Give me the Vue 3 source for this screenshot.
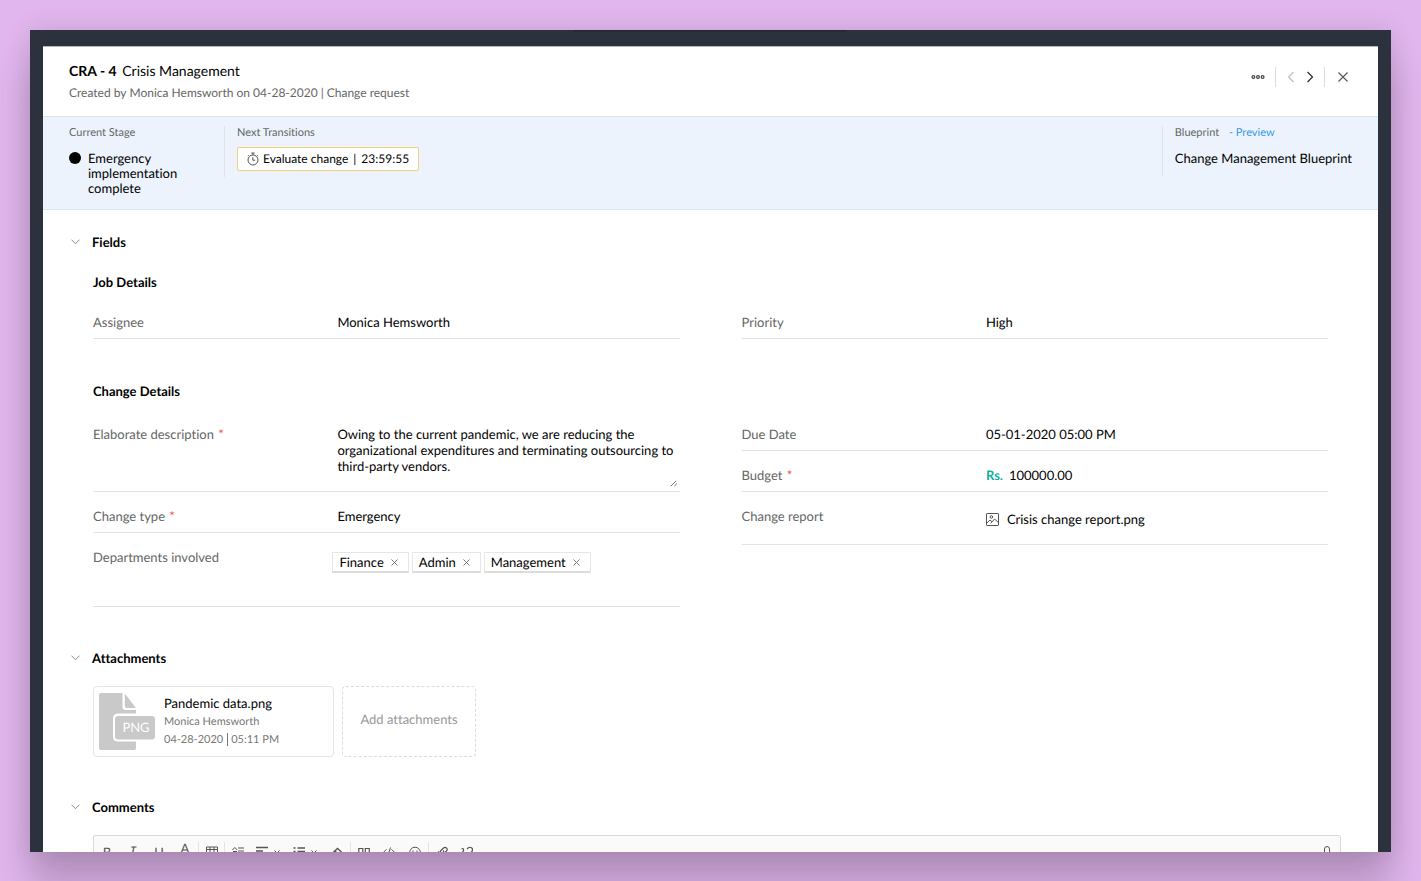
<script setup>
import { ref } from 'vue'

const description = ref(
  'Owing to the current pandemic, we are reducing the organizational expenditures and terminating outsourcing to third-party vendors.'
)
const assignee = ref('Monica Hemsworth')
const priority = ref('High')
const dueDate = ref('05-01-2020 05:00 PM')
const budget = ref('100000.00')
const changeType = ref('Emergency')
const departments = ref(['Finance', 'Admin', 'Management'])

const removeDepartment = (name) => {
  departments.value = departments.value.filter((d) => d !== name)
}
</script>

<template>
  <div class="stage">
    <div class="frame">
      <main class="panel">
        <header class="head">
          <div>
            <h1 class="title"><b>CRA - 4</b> Crisis Management</h1>
            <p class="byline">
              <span>Created by</span><span>Monica Hemsworth</span><span>on 04-28-2020</span><span>| Change request</span>
            </p>
          </div>
          <nav class="actions" aria-label="Record actions">
            <button class="icon-btn more" aria-label="More">
              <svg width="14" height="6" viewBox="0 0 14 6" fill="none" stroke="#444" stroke-width="1.2">
                <circle cx="2.4" cy="3" r="1.4" /><circle cx="7" cy="3" r="1.4" /><circle cx="11.6" cy="3" r="1.4" />
              </svg>
            </button>
            <i class="bar"></i>
            <button class="icon-btn" aria-label="Previous">
              <svg width="8" height="12" viewBox="0 0 8 12" fill="none" stroke="#bbb" stroke-width="1.1"><path d="M6.5 1L1.5 6l5 5" /></svg>
            </button>
            <button class="icon-btn" aria-label="Next">
              <svg width="8" height="12" viewBox="0 0 8 12" fill="none" stroke="#333" stroke-width="1.3"><path d="M1.5 1l5 5-5 5" /></svg>
            </button>
            <i class="bar"></i>
            <button class="icon-btn close" aria-label="Close">
              <svg width="10" height="10" viewBox="0 0 10 10" fill="none" stroke="#555" stroke-width="1.1"><path d="M.5.5l9 9M9.5.5l-9 9" /></svg>
            </button>
          </nav>
        </header>

        <section class="strip">
          <div class="strip-col current">
            <span class="small">Current Stage</span>
            <div class="state"><i class="dot"></i><span>Emergency implementation complete</span></div>
          </div>
          <div class="strip-col next">
            <span class="small">Next Transitions</span>
            <button class="transition">
              <svg width="12" height="14" viewBox="0 0 12 14" fill="none" stroke="#555" stroke-width="1">
                <circle cx="6" cy="8" r="5" /><path d="M4.3 1h3.4M6 1v2M10 3.2l1 1M2 3.2l-1 1M5.8 5.2v3h2.4" />
              </svg>
              <span>Evaluate change</span><span>|</span><span>23:59:55</span>
            </button>
          </div>
          <div class="strip-col blueprint">
            <span class="small">Blueprint <a href="#preview">- Preview</a></span>
            <span class="bp-name">Change Management Blueprint</span>
          </div>
        </section>

        <section class="section">
          <h2 class="section-title">
            <button class="toggle" aria-label="Collapse fields"><svg width="9" height="6" viewBox="0 0 9 6" fill="none" stroke="#888"><path d="M.5.7l4 4 4-4" /></svg></button>
            Fields
          </h2>

          <h3 class="group-title job">Job Details</h3>
          <div class="columns">
            <div class="row">
              <label for="assignee">Assignee</label>
              <input id="assignee" v-model="assignee" type="text" />
            </div>
            <div class="row">
              <label for="priority">Priority</label>
              <select id="priority" v-model="priority"><option>High</option><option>Medium</option><option>Low</option></select>
            </div>
          </div>

          <h3 class="group-title change">Change Details</h3>
          <div class="columns">
            <div>
              <div class="row">
                <label for="description">Elaborate description <em>*</em></label>
                <div class="area">
                  <textarea id="description" v-model="description"></textarea>
                  <svg class="grip" width="8" height="8" viewBox="0 0 8 8" stroke="#666" stroke-width=".9"><path d="M.8 7.2l5.4-5.4M4.3 7.2L7 4.5" /></svg>
                </div>
              </div>
              <div class="row">
                <label for="type">Change type <em>*</em></label>
                <select id="type" v-model="changeType"><option>Emergency</option><option>Standard</option></select>
              </div>
              <div class="row departments">
                <span>Departments involved</span>
                <ul class="chips">
                  <li v-for="name in departments" :key="name" class="chip">
                    {{ name }}
                    <button :aria-label="'Remove ' + name" @click="removeDepartment(name)">
                      <svg width="7" height="7" viewBox="0 0 7 7" stroke="#777"><path d="M.5.5l6 6M6.5.5l-6 6" /></svg>
                    </button>
                  </li>
                </ul>
              </div>
            </div>
            <div>
              <div class="row">
                <label for="due">Due Date</label>
                <input id="due" v-model="dueDate" type="text" />
              </div>
              <div class="row">
                <label for="budget">Budget <em>*</em></label>
                <div class="money"><b>Rs.</b><input id="budget" v-model="budget" type="text" /></div>
              </div>
              <div class="row report">
                <span>Change report</span>
                <div class="file">
                  <svg width="13" height="13" viewBox="0 0 13 13" fill="none" stroke="#555"><rect x=".5" y=".5" width="12" height="12" rx=".6" /><circle cx="5.4" cy="4" r="1.3" /><path d="M.8 10.2L4 7l2 1.8M4.6 10.4L8.6 6l3.8 3.6" /></svg>
                  Crisis change report.png
                </div>
              </div>
            </div>
          </div>
        </section>

        <section class="section attachments">
          <h2 class="section-title">
            <button class="toggle" aria-label="Collapse attachments"><svg width="9" height="6" viewBox="0 0 9 6" fill="none" stroke="#888"><path d="M.5.7l4 4 4-4" /></svg></button>
            Attachments
          </h2>
          <div class="cards">
            <article class="card">
              <svg width="57" height="58" viewBox="0 0 57 58">
                <path d="M2 0H23.500V14Q23.500 17 26.500 17H37V20.500H19Q14 20.500 14 25.500V43.500Q14 48.500 19 48.500H37V55Q37 57 35 57H2Q0 57 0 55V2Q0 0 2 0Z" fill="#c9c9c9" />
                <path d="M25.800 .500L37 15H27.500Q25.800 15 25.800 13Z" fill="#c9c9c9" />
                <rect x="16" y="23" width="40" height="23.500" rx="3" fill="#c9c9c9" />
                <text x="37" y="39" text-anchor="middle" font-size="13" fill="#fff">PNG</text>
              </svg>
              <div class="meta">
                <span class="name">Pandemic data.png</span>
                <span class="sub">Monica Hemsworth</span>
                <span class="sub stamp"><span>04-28-2020</span><span>05:11 PM</span></span>
              </div>
            </article>
            <button class="add">Add attachments</button>
          </div>
        </section>

        <section class="section comments">
          <h2 class="section-title">
            <button class="toggle" aria-label="Collapse comments"><svg width="9" height="6" viewBox="0 0 9 6" fill="none" stroke="#888"><path d="M.5.7l4 4 4-4" /></svg></button>
            Comments
          </h2>
          <div class="editor" role="toolbar" aria-label="Formatting">
            <button aria-label="Bold">B</button>
            <button class="italic" aria-label="Italic">I</button>
            <button aria-label="Underline">U</button>
            <button class="colour" aria-label="Text colour">A</button>
            <button class="sep" aria-label="Table"><svg viewBox="0 0 12 12"><path d="M.5 1h11v10.500H.5zM.5 3.500h11M.5 6.500h11M4 1v10.500M8 1v10.500" /></svg></button>
            <button class="sep" aria-label="Line height"><svg viewBox="0 0 12 12"><path d="M.3 4l2.500-2.500L5.300 4M1 5.500h4M6 2h6M6 5h6M6 8.500h6M.8 8.500l2 2 2-2" /></svg></button>
            <button class="menu" aria-label="Align"><svg viewBox="0 0 12 12"><path d="M0 1.500h12M0 5h7M0 8.500h12" stroke-width="1.300" /></svg><svg class="caret" viewBox="0 0 6 12"><path d="M.5 4.500l2.500 2.500L5.500 4.500" /></svg></button>
            <button class="menu" aria-label="List"><svg viewBox="0 0 12 12"><path d="M4.500 2h7.500M4.500 5.500h7.500M4.500 9h7.500M.5 2h2M.5 5.500h2M.5 9h2" stroke-width="1.300" /></svg><svg class="caret" viewBox="0 0 6 12"><path d="M.5 4.500l2.500 2.500L5.500 4.500" /></svg></button>
            <button aria-label="Clear formatting"><svg viewBox="0 0 12 12"><path d="M1 7.500l5.500-5 5 4.500L6.500 11.500H4.500zM4 5L8.500 9.500" stroke-width="1.300" /></svg></button>
            <button class="sep" aria-label="Quote"><svg viewBox="0 0 12 12"><path d="M.8 2.500h4v4.500h-4zM7.300 2.500h4v4.500h-4zM4.800 7q0 3-3 4M11.300 7q0 3-3 4" stroke-width="1.200" /></svg></button>
            <button aria-label="Code"><svg viewBox="0 0 12 12"><path d="M3.500 3.300L.5 6.300l3 3.200M8.500 3.300l3 3-3 3.200M7.500 1.500l-3 9" /></svg></button>
            <button aria-label="Emoji"><svg viewBox="0 0 12 12"><circle cx="6" cy="6.500" r="5.300" /><path d="M4 4.500v1.500M8 4.500v1.500M3.300 8q2.700 2.500 5.400 0" /></svg></button>
            <button class="sep" aria-label="Link"><svg viewBox="0 0 12 12"><path d="M5 7.500q-1.500-1.500 0-3l2.500-2.500q1.500-1.300 3 0t0 3L9 6.500M7 4.500q1.500 1.500 0 3L4.500 10q-1.500 1.300-3 0t0-3L3 5.500" stroke-width="1.200" /></svg></button>
            <button aria-label="Unlink"><svg viewBox="0 0 12 12"><path d="M6 3l1-1q2-1.500 3.700 0t0 3.700L9.500 7M6 9l-1 1q-2 1.500-3.700 0t0-3.700L2.500 5M.5 2.500l2 .5V5M11 10.500l-2-.5" stroke-width="1.200" /></svg></button>
            <button class="mic" aria-label="Dictate"><svg viewBox="0 0 12 12"><path d="M3.500 6V3q0-2.500 2.500-2.500T8.500 3v3q0 2.500-2.500 2.500T3.500 6zM6 8.500v3" /></svg></button>
          </div>
        </section>
      </main>
    </div>
  </div>
</template>

<style>
body {
  background: #e1b6ee;
  overflow: hidden;
}
</style>

<style scoped>
* {
  box-sizing: border-box;
}
.stage {
  height: 100vh;
  padding: 30px 30px 29px;
  font-family: Lato, "Open Sans", sans-serif;
  font-size: 13px;
  line-height: 16px;
  font-variant-ligatures: none;
  text-rendering: geometricPrecision;
  color: #000;
}
.frame {
  position: relative;
  height: 100%;
  padding: 16px 13px 0;
  background: #2b323e;
  box-shadow: 0 0 24px rgba(0, 0, 0, 0.12), 0 36px 36px rgba(0, 0, 0, 0.19);
}
.frame::before {
  content: "";
  position: absolute;
  top: 0;
  left: 40%;
  right: 40%;
  height: 3px;
  background: linear-gradient(#222630, #2b323e);
}
.panel {
  height: 100%;
  overflow: hidden;
  background: #fff;
  border-top: 1px solid #b4b8bc;
}
h1,
h2,
h3,
p,
ul {
  margin: 0;
  padding: 0;
}
button,
input,
select,
textarea {
  font: inherit;
  color: inherit;
  text-rendering: inherit;
  font-variant-ligatures: none;
  margin: 0;
  padding: 0;
  border: 0;
  background: none;
  outline: 0;
  appearance: none;
}
svg {
  flex: none;
}
.head {
  display: flex;
  justify-content: space-between;
  align-items: flex-start;
  height: 69px;
  padding: 14px 26px 0;
}
.title {
  font-size: 14px;
  font-weight: 400;
  line-height: 20px;
}
.title b {
  margin-right: 2px;
}
.byline {
  display: flex;
  gap: 3px;
  margin-top: 4px;
  font-size: 12px;
  color: #666;
}
.actions {
  display: flex;
  align-items: center;
  height: 20px;
  margin-top: 6px;
}
.icon-btn {
  display: flex;
  align-items: center;
  justify-content: center;
  width: 19px;
  height: 20px;
}
.bar {
  width: 1px;
  height: 20px;
  margin: 0 5px;
  background: #ddd;
}
.more {
  width: 24px;
}
.close {
  width: 22px;
  justify-content: flex-end;
  padding-right: 4px;
}
.strip {
  display: flex;
  padding: 8px 26px 13px;
  background: #ecf3fc;
  border: 1px solid #d6e8f5;
  border-width: 1px 0;
}
.strip-col {
  display: flex;
  flex-direction: column;
  align-items: flex-start;
}
.current {
  width: 155px;
}
.next,
.blueprint {
  position: relative;
  padding-left: 13px;
}
.next::before,
.blueprint::before {
  content: "";
  position: absolute;
  left: 0;
  top: 1px;
  width: 1px;
  height: 51px;
  background: #dde3ea;
}
.blueprint {
  margin-left: auto;
}
.small {
  font-size: 11px;
  color: #666;
}
.small a {
  margin-left: 7px;
  color: #3598e8;
  text-decoration: none;
}
.state {
  display: flex;
  gap: 7px;
  width: 130px;
  margin-top: 10px;
  line-height: 15px;
}
.dot {
  flex: none;
  width: 12px;
  height: 12px;
  margin-top: 1px;
  border-radius: 50%;
  background: #000;
}
.transition {
  display: flex;
  align-items: center;
  gap: 5px;
  height: 24px;
  margin-top: 6px;
  padding: 0 9px;
  border: 1px solid #f3cf7e;
  border-radius: 2px;
  background: #fff;
  font-size: 12px;
}
.transition svg {
  margin-right: -1px;
}
.bp-name {
  margin-top: 9px;
}
.section {
  padding: 24px 50px 0;
}
.section-title {
  display: flex;
  align-items: center;
  gap: 12px;
  margin-left: -22px;
  font-size: 13px;
  font-weight: 700;
}
.toggle {
  display: flex;
  width: 9px;
}
.group-title {
  font-size: 13px;
  font-weight: 700;
}
.job {
  margin: 24px 0 8px;
}
.change {
  margin: 44px 0 11px;
}
.columns {
  display: grid;
  grid-template-columns: 1fr 1fr;
  gap: 62px;
  align-items: start;
}
.row {
  display: grid;
  grid-template-columns: 5fr 7fr;
  align-items: start;
  padding: 16px 0 8px;
  border-bottom: 1px solid #e3e3e3;
}
.row > label,
.row > span {
  color: #666;
}
.row em {
  margin-left: 1px;
  color: #f04848;
  font-style: normal;
}
.row input,
.row select {
  display: block;
  width: 100%;
  height: 16px;
}
.area {
  position: relative;
}
.area textarea {
  display: block;
  width: 100%;
  height: 57px;
  resize: none;
  overflow: hidden;
}
.grip {
  position: absolute;
  right: 2px;
  bottom: -4px;
}
.departments {
  padding-bottom: 33px;
}
.chips {
  display: flex;
  gap: 3px;
  margin: 3px 0 0 -5px;
  list-style: none;
}
.chip {
  display: flex;
  align-items: center;
  gap: 7px;
  height: 21px;
  padding: 0 10px 0 6px;
  border: 1px solid #e6e6e6;
  border-bottom: 2px solid #dcdcdc;
}
.chip button {
  display: flex;
}
.money {
  display: flex;
  gap: 6px;
}
.money b {
  color: #12b0a0;
}
.file {
  display: flex;
  align-items: center;
  gap: 8px;
  margin: 3px 0 9px;
}
.attachments {
  padding-top: 43px;
}
.cards {
  display: flex;
  gap: 8px;
  margin-top: 20px;
}
.card {
  display: flex;
  gap: 8px;
  width: 241px;
  height: 71px;
  padding: 6px 5px;
  border: 1px solid #e4e4e4;
  border-radius: 4px;
}
.meta {
  display: flex;
  flex-direction: column;
  gap: 2px;
  padding-top: 2px;
}
.name {
  margin-bottom: 1px;
}
.sub {
  font-size: 11px;
  color: #777;
}
.stamp span + span {
  margin-left: 4px;
  padding-left: 3px;
  border-left: 1px solid #777;
}
.add {
  width: 134px;
  height: 71px;
  padding-bottom: 5px;
  border: 1px dashed #dcdcdc;
  border-radius: 4px;
  color: #999;
}
.comments {
  padding: 42px 37px 0 50px;
}
.editor {
  display: flex;
  height: 160px;
  margin-top: 20px;
  border: 1px solid #d9dada;
  border-radius: 2px;
  background: #fafafa;
}
.editor button {
  display: flex;
  align-items: center;
  justify-content: center;
  width: 26px;
  height: 20px;
  margin-top: 6px;
  color: #555;
}
.editor .italic {
  font-family: "Liberation Mono", monospace;
  font-style: italic;
}
.editor .colour {
  padding-bottom: 8px;
}
.editor .sep {
  border-left: 1px solid #e4e4e4;
}
.editor svg {
  width: 12px;
  height: 12px;
  fill: none;
  stroke: #555;
}
.editor .menu {
  justify-content: flex-start;
  gap: 6px;
  width: 37px;
  padding-left: 6px;
}
.editor .caret {
  width: 6px;
}
.editor .mic {
  margin-left: auto;
}
</style>
